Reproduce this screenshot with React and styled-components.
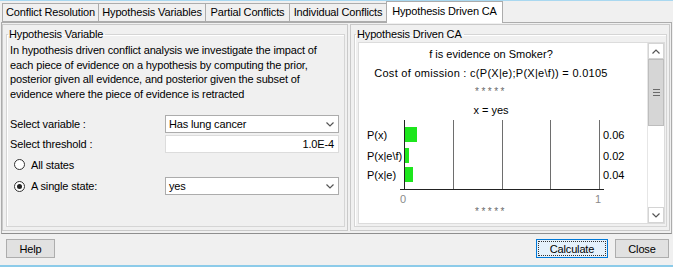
import React from "react";
import styled, { createGlobalStyle } from "styled-components";

const GlobalStyle = createGlobalStyle`
  body {
    margin: 0;
    background: #f0f0f0;
    font-family: "Liberation Sans", Arial, sans-serif;
    font-size: 11px;
    letter-spacing: -0.15px;
    color: #000;
  }
`;

const Frame = styled.div`
  width: 673px;
  height: 267px;
  box-sizing: border-box;
  border-top: 1px solid #a9d8f0;
  border-bottom: 2px solid #8ccbe9;
  background: #f0f0f0;
  display: flex;
  flex-direction: column;
`;

const TabBar = styled.div`
  display: flex;
  align-items: flex-end;
  height: 21px;
  padding-left: 2px;
`;

const Tab = styled.div`
  position: relative;
  box-sizing: border-box;
  width: ${(p) => p.$w};
  height: ${(p) => (p.$active ? "22px" : "19px")};
  margin-left: -1px;
  margin-bottom: ${(p) => (p.$active ? "-1px" : "0")};
  border: 1px solid #acacac;
  border-bottom: ${(p) => (p.$active ? "none" : "1px solid #acacac")};
  background: ${(p) => (p.$active ? "#fff" : "#f0f0f0")};
  line-height: ${(p) => (p.$active ? "18px" : "17px")};
  text-align: center;
  white-space: nowrap;
  z-index: ${(p) => (p.$active ? 1 : 0)};
  &:first-child {
    margin-left: 0;
  }
`;

const Pane = styled.div`
  height: 212px;
  box-sizing: border-box;
  margin: 0 1px;
  border: 1px solid #acacac;
  border-bottom: 1px solid #8e8e8e;
  display: flex;
  gap: 2px;
  padding: 1px 1px 2px 0;
`;

const Side = styled.div`
  box-sizing: border-box;
  width: ${(p) => p.$width || "auto"};
  flex: ${(p) => (p.$width ? "none" : "1")};
  min-width: 0;
  border: 1px solid #c9c9c9;
  display: flex;
  padding: 3px 2px 3px 3px;
`;

const Group = styled.fieldset`
  flex: 1;
  min-width: 0;
  margin: 0;
  padding: 0 ${(p) => p.$padRight || "4px"} 2px 3px;
  border: 1px solid #d5d5d5;
  box-shadow: inset 1px 1px 0 #fff;
  display: flex;
  flex-direction: column;
`;

const GroupTitle = styled.legend`
  padding: 0 2px 0 1px;
  margin-left: -2px;
  line-height: 12px;
  color: #000;
`;

const Description = styled.p`
  margin: 3px 0 0;
  line-height: 14.5px;
`;

const Form = styled.div`
  display: grid;
  grid-template-columns: 155px 174px;
  grid-auto-rows: 18px;
  row-gap: 2px;
  margin-top: 14px;
  align-items: center;
`;

const Label = styled.span`
  white-space: nowrap;
`;

const RadioRow = styled.label`
  display: flex;
  align-items: center;
  gap: 6px;
  padding-left: 4px;
  margin-top: ${(p) => p.$gap || "0"};
`;

const RadioDot = styled.span`
  width: 11px;
  height: 11px;
  box-sizing: border-box;
  border-radius: 50%;
  border: 1px solid #333;
  background: #fff;
  display: flex;
  align-items: center;
  justify-content: center;
  &::after {
    content: "";
    width: 5px;
    height: 5px;
    border-radius: 50%;
    background: ${(p) => (p.$checked ? "#222" : "transparent")};
  }
`;

const Combo = styled.div`
  height: 18px;
  box-sizing: border-box;
  margin-top: ${(p) => p.$gap || "0"};
  border: 1px solid #acacac;
  background: #fff;
  display: flex;
  align-items: center;
  justify-content: space-between;
  padding: 0 4px 0 3px;
`;

const Field = styled.div`
  height: 18px;
  box-sizing: border-box;
  border: 1px solid #dcdcdc;
  background: #fff;
  text-align: right;
  line-height: 16px;
  padding-right: 4px;
`;

const Scroller = styled.div`
  flex: 1;
  margin-top: 2px;
  border: 1px solid #dcdcdc;
  background: #fff;
  display: flex;
  min-height: 0;
  min-width: 0;
`;

const Body = styled.div`
  flex: 1;
  min-width: 0;
  overflow: hidden;
  display: flex;
  flex-direction: column;
  align-items: center;
  padding: 2px 24px 0 0;
  letter-spacing: 0;
`;

const Line = styled.div`
  height: 19px;
  line-height: 19px;
  white-space: nowrap;
  letter-spacing: ${(p) => p.$spacing || "0"};
`;

const Stars = styled.div`
  height: ${(p) => p.$h || "15px"};
  line-height: ${(p) => p.$h || "15px"};
  font-size: 10px;
  letter-spacing: 2.5px;
  color: #6a6a6a;
`;

const Chart = styled.svg`
  align-self: flex-start;
  flex: none;
  display: block;
  font-family: "Liberation Sans", Arial, sans-serif;
  font-size: 11px;
`;

const ScrollBar = styled.div`
  width: 16px;
  flex: none;
  display: flex;
  flex-direction: column;
  border-left: 1px solid #e6e6e6;
  background: #fff;
`;

const Arrow = styled.div`
  height: 16px;
  box-sizing: border-box;
  border: 1px solid #d4d4d4;
  display: flex;
  align-items: center;
  justify-content: center;
`;

const Thumb = styled.div`
  height: 67px;
  box-sizing: border-box;
  background: #d6d6d6;
  border: 1px solid #bdbdbd;
  display: flex;
  align-items: center;
  justify-content: center;
`;

const Track = styled.div`
  flex: 1;
`;

const Footer = styled.div`
  flex: 1;
  display: flex;
  justify-content: space-between;
  align-items: flex-start;
  padding: 5px 4px 0 6px;
`;

const ButtonGroup = styled.div`
  display: flex;
  gap: 7px;
`;

const Button = styled.button`
  height: 19px;
  width: ${(p) => p.$w};
  box-sizing: border-box;
  margin: 0;
  padding: 0;
  font-family: "Liberation Sans", Arial, sans-serif;
  font-size: 11px;
  letter-spacing: -0.15px;
  color: #000;
  background: ${(p) => (p.$focused ? "#e5f1fb" : "#e1e1e1")};
  border: 1px solid ${(p) => (p.$focused ? "#0078d7" : "#adadad")};
  outline: ${(p) => (p.$focused ? "1px dotted #333" : "none")};
  outline-offset: -3px;
`;

const Chevron = ({ up }) => (
  <svg width="8" height="5" viewBox="0 0 8 5">
    <path
      d={up ? "M0.5 4.5 L4 1 L7.5 4.5" : "M0.5 0.5 L4 4 L7.5 0.5"}
      fill="none"
      stroke="#555"
      strokeWidth="1.2"
    />
  </svg>
);

const Grip = () => (
  <svg width="7" height="7" viewBox="0 0 7 7">
    <path d="M0 0.5H7M0 3.5H7M0 6.5H7" stroke="#6b6b6b" strokeWidth="1" />
  </svg>
);

const bars = [
  { label: "P(x)", value: 0.06, y: 7, text: "0.06" },
  { label: "P(x|e\\f)", value: 0.02, y: 28, text: "0.02" },
  { label: "P(x|e)", value: 0.04, y: 47, text: "0.04" },
];

// chart geometry, left edge = inner edge of white pane
const x0 = 45;
const x1 = 240;

const BarChart = () => (
  <Chart width="292" height="86" viewBox="0 0 292 86">
    {[0.25, 0.5, 0.75, 1].map((t) => (
      <line
        key={t}
        x1={Math.round(x0 + t * (x1 - x0)) + 0.5}
        x2={Math.round(x0 + t * (x1 - x0)) + 0.5}
        y1="0"
        y2="69"
        stroke="#6e6e6e"
      />
    ))}
    <line x1={x0 + 0.5} x2={x0 + 0.5} y1="0" y2="69" stroke="#222" />
    <line x1="41" x2="245" y1="69.5" y2="69.5" stroke="#222" />
    {bars.map((b) => (
      <g key={b.label}>
        <rect
          x={x0 + 1}
          y={b.y}
          width={Math.max(3, Math.round(b.value * (x1 - x0)))}
          height="15"
          fill="#1de61d"
        />
        <text x="8" y={b.y + 12}>
          {b.label}
        </text>
        <text x="244" y={b.y + 12}>
          {b.text}
        </text>
      </g>
    ))}
    <text x="44" y="83" textAnchor="middle" fill="#8a8a8a">
      0
    </text>
    <text x="239" y="83" textAnchor="middle" fill="#8a8a8a">
      1
    </text>
  </Chart>
);

export default function App() {
  return (
    <>
      <GlobalStyle />
      <Frame>
        <TabBar>
          <Tab $w="97px">Conflict Resolution</Tab>
          <Tab $w="108px">Hypothesis Variables</Tab>
          <Tab $w="85px">Partial Conflicts</Tab>
          <Tab $w="98px">Individual Conflicts</Tab>
          <Tab $w="117px" $active>
            Hypothesis Driven CA
          </Tab>
        </TabBar>
        <Pane>
          <Side $width="346px">
            <Group>
              <GroupTitle>Hypothesis Variable</GroupTitle>
              <Description>
                In hypothesis driven conflict analysis we investigate the impact of
                <br />
                each piece of evidence on a hypothesis by computing the prior,
                <br />
                posterior given all evidence, and posterior given the subset of
                <br />
                evidence where the piece of evidence is retracted
              </Description>
              <Form>
                <Label>Select variable :</Label>
                <Combo>
                  Has lung cancer
                  <Chevron />
                </Combo>
                <Label>Select threshold :</Label>
                <Field>1.0E-4</Field>
                <RadioRow $gap="1px">
                  <RadioDot />
                  All states
                </RadioRow>
                <span />
                <RadioRow $gap="4px">
                  <RadioDot $checked />
                  A single state:
                </RadioRow>
                <Combo $gap="4px">
                  yes
                  <Chevron />
                </Combo>
              </Form>
            </Group>
          </Side>
          <Side>
            <Group $padRight="1px">
              <GroupTitle>Hypothesis Driven CA</GroupTitle>
              <Scroller>
                <Body>
                  <Line>f is evidence on Smoker?</Line>
                  <Line $spacing="0.28px">
                    Cost of omission : c(P(X|e);P(X|e\f)) = 0.0105
                  </Line>
                  <Stars $h="18px">*****</Stars>
                  <Line>x = yes</Line>
                  <BarChart />
                  <Stars $h="12px">*****</Stars>
                </Body>
                <ScrollBar>
                  <Arrow>
                    <Chevron up />
                  </Arrow>
                  <Thumb>
                    <Grip />
                  </Thumb>
                  <Track />
                  <Arrow>
                    <Chevron />
                  </Arrow>
                </ScrollBar>
              </Scroller>
            </Group>
          </Side>
        </Pane>
        <Footer>
          <Button $w="49px">Help</Button>
          <ButtonGroup>
            <Button $w="72px" $focused>
              Calculate
            </Button>
            <Button $w="54px">Close</Button>
          </ButtonGroup>
        </Footer>
      </Frame>
    </>
  );
}
